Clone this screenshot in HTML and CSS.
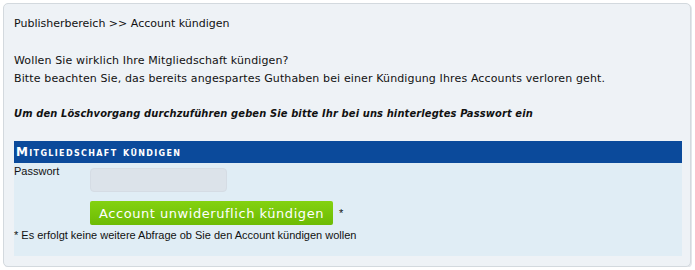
FILE: index.html
```html
<!DOCTYPE html>
<html lang="de">
<head>
<meta charset="utf-8">
<title>Account kündigen</title>
<link rel="stylesheet" href="styles.css">
</head>
<body>
<div class="box">
  <p class="crumb">Publisherbereich &gt;&gt; Account kündigen</p>
  <p class="intro">Wollen Sie wirklich Ihre Mitgliedschaft kündigen?<br>Bitte beachten Sie, das bereits angespartes Guthaben bei einer Kündigung Ihres Accounts verloren geht.</p>
  <p class="notice">Um den Löschvorgang durchzuführen geben Sie bitte Ihr bei uns hinterlegtes Passwort ein</p>
  <div class="panel-head">Mitgliedschaft kündigen</div>
  <div class="panel">
    <div class="row">
      <label class="label" for="pw">Passwort</label>
      <input class="input" id="pw" type="password">
    </div>
    <div class="row">
      <span class="label"></span>
      <div class="action"><button class="btn" type="button">Account unwideruflich kündigen</button><span class="star">*</span></div>
    </div>
    <p class="foot">* Es erfolgt keine weitere Abfrage ob Sie den Account kündigen wollen</p>
  </div>
</div>
</body>
</html>
```
FILE: styles.css
```css
html, body { margin: 0; padding: 0; background: #ffffff; }
.box {
  margin: 3px 0 0 3px;
  width: 668px;
  height: 244px;
  border: 1px solid #d3d9de;
  border-radius: 5px;
  background: #eef2f6;
  padding: 10px 8px 8px 10px;
  font-family: "DejaVu Sans", sans-serif;
  font-size: 11px;
  color: #111;
  box-shadow: 1px 1px 0 #e2e6ea;
}
.crumb { margin: 0; line-height: 18px; padding-top: 1px; }
.intro { margin: 19px 0 0 0; line-height: 18px; letter-spacing: 0.13px; }
.notice {
  margin: 17px 0 0 0;
  line-height: 18px;
  font-family: "DejaVu Sans Condensed", "DejaVu Sans", sans-serif;
  font-weight: bold;
  font-style: italic;
  letter-spacing: 0.13px;
}
.panel-head {
  margin-top: 18px;
  height: 22px;
  line-height: 22px;
  background: #0b4a9b;
  color: #fff;
  font-family: "DejaVu Sans", sans-serif;
  font-weight: bold;
  font-size: 12px;
  font-variant: small-caps;
  padding-left: 2px;
  letter-spacing: 1.35px;
}
.panel {
  background: #e0edf5;
  height: 93px;
}
.row { display: flex; align-items: flex-start; }
.label {
  width: 76px;
  flex: none;
  font-family: "Liberation Sans", Arial, sans-serif;
  font-size: 11px;
  line-height: 16px;
}
.input {
  margin: 5px 0 0 0;
  width: 137px;
  height: 24px;
  box-sizing: border-box;
  border: 1px solid #d5dce4;
  border-radius: 4px;
  background: #dce3ea;
}
.action { display: flex; align-items: center; margin-top: 9px; }
.btn {
  height: 24px;
  width: 243px;
  border: 0;
  border-radius: 2px;
  background: linear-gradient(#84d210, #6dbb04);
  color: #fff;
  font-family: "DejaVu Sans", sans-serif;
  font-size: 13px;
  padding: 0;
  letter-spacing: 0.55px;
}
.star { margin-left: 6px; font-family: "Liberation Sans", Arial, sans-serif; font-size: 11px; }
.foot {
  margin: 3px 0 0 0;
  font-family: "Liberation Sans", Arial, sans-serif;
  font-size: 11px;
  line-height: 14px;
}
```
